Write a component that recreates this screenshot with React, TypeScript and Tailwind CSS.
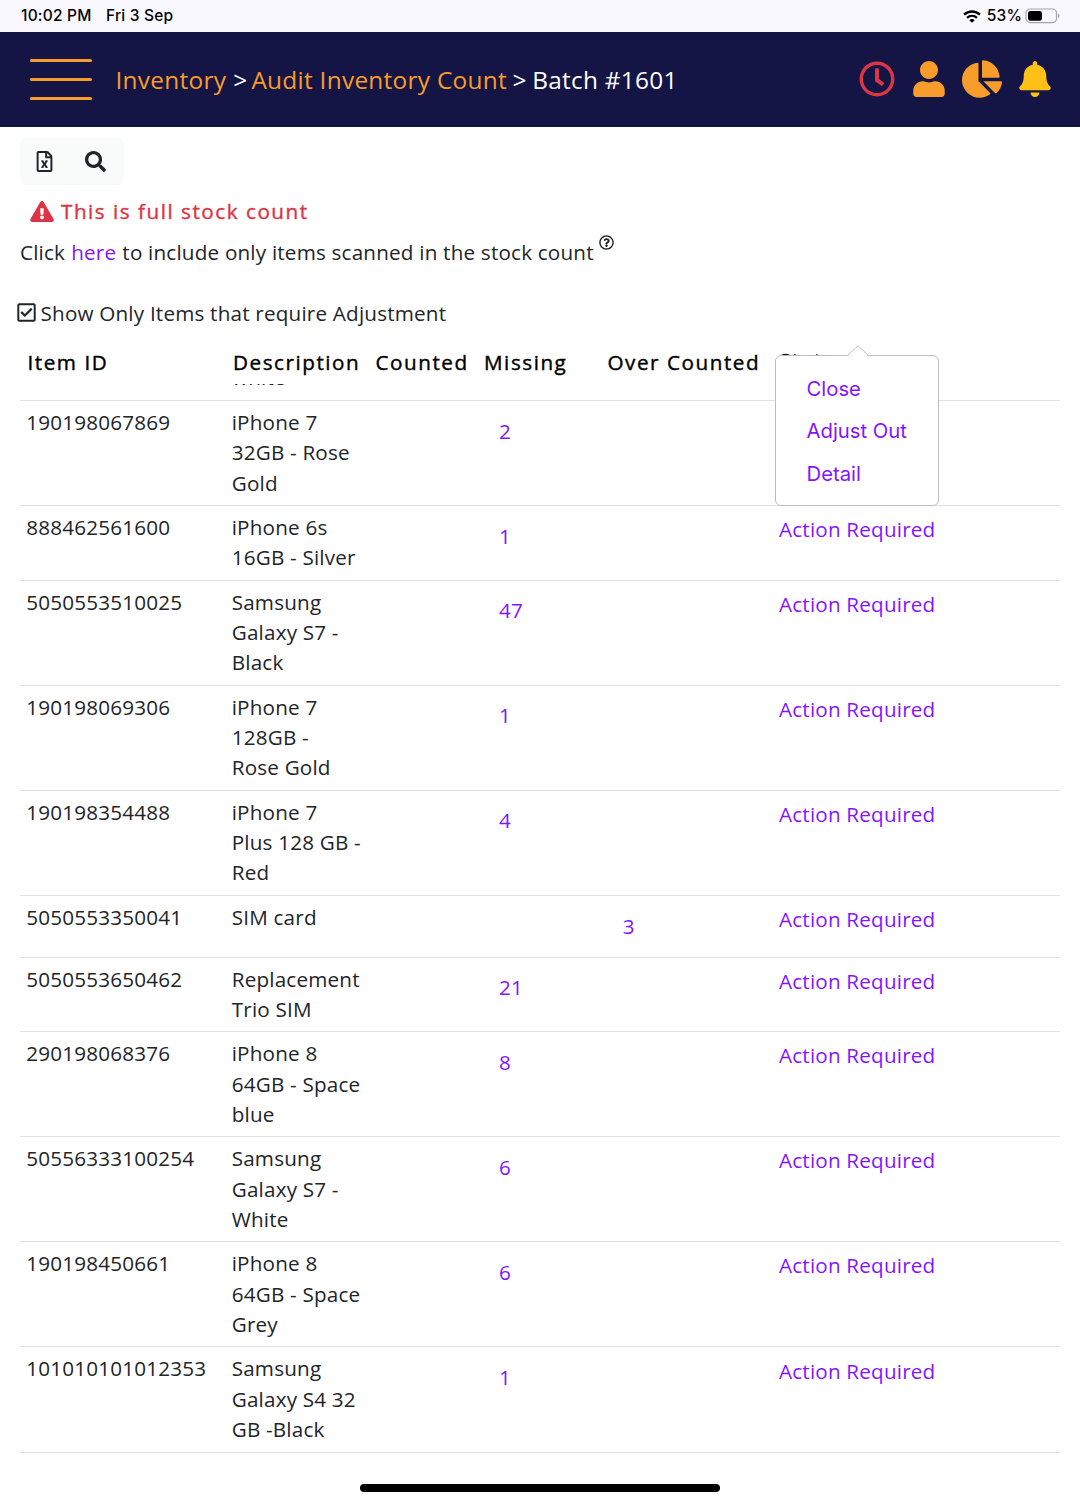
import { FaBell, FaChartPie, FaExclamationTriangle, FaRegCheckSquare, FaRegClock, FaRegFileExcel, FaRegQuestionCircle, FaSearch, FaUser } from 'react-icons/fa'

type Row = {
  id: string
  description: string[]
  missing?: number
  over?: number
  height: string
}

const rows: Row[] = [
  { id: '190198067869', description: ['iPhone 7', '32GB - Rose', 'Gold'], missing: 2, height: 'h-[105px]' },
  { id: '888462561600', description: ['iPhone 6s', '16GB - Silver'], missing: 1, height: 'h-[74.5px]' },
  { id: '5050553510025', description: ['Samsung', 'Galaxy S7 -', 'Black'], missing: 47, height: 'h-[105px]' },
  { id: '190198069306', description: ['iPhone 7', '128GB -', 'Rose Gold'], missing: 1, height: 'h-[105px]' },
  { id: '190198354488', description: ['iPhone 7', 'Plus 128 GB -', 'Red'], missing: 4, height: 'h-[105.3px]' },
  { id: '5050553350041', description: ['SIM card'], over: 3, height: 'h-[61.9px]' },
  { id: '5050553650462', description: ['Replacement', 'Trio SIM'], missing: 21, height: 'h-[74.5px]' },
  { id: '290198068376', description: ['iPhone 8', '64GB - Space', 'blue'], missing: 8, height: 'h-[105px]' },
  { id: '50556333100254', description: ['Samsung', 'Galaxy S7 -', 'White'], missing: 6, height: 'h-[105px]' },
  { id: '190198450661', description: ['iPhone 8', '64GB - Space', 'Grey'], missing: 6, height: 'h-[105.3px]' },
  { id: '101010101012353', description: ['Samsung', 'Galaxy S4 32', 'GB -Black'], missing: 1, height: 'h-[105.3px]' },
]

const columns = 'grid grid-cols-[205.5px_143.5px_108.5px_123.5px_171.5px_1fr]'

function StatusBar() {
  return (
    <div className="flex h-8 items-center bg-[#f9f8ff] pl-[21px] pr-[20px] font-[Inter,sans-serif] text-[15.5px] font-medium tracking-[0.2px] text-black">
      <span>10:02 PM</span>
      <span className="ml-[14.5px]">Fri 3 Sep</span>
      <svg className="ml-auto h-[13px] w-[18px]" viewBox="0 0 18 13" fill="none" stroke="currentColor">
        <path d="M1 4.7C5.6.4 12.4.4 17 4.7" strokeWidth="2.4" />
        <path d="M4 7.8c2.9-2.6 7.1-2.6 10 0" strokeWidth="2.3" />
        <path d="M9 12.8 6.3 10.2a4 4 0 0 1 5.4 0z" fill="currentColor" stroke="none" />
      </svg>
      <span className="ml-[6px]">53%</span>
      <svg className="ml-[3px] h-[16px] w-[35px]" viewBox="0 0 35 16">
        <rect x="1" y="1" width="30.5" height="13.6" rx="4" fill="none" stroke="#a4a3a9" strokeWidth="1.2" />
        <rect x="3" y="3" width="14" height="9.8" rx="2.3" fill="#000" />
        <path d="M33 5.5c2 .8 2 3.8 0 4.6z" fill="#a4a3a9" />
      </svg>
    </div>
  )
}

function Header() {
  return (
    <header className="flex h-[95px] items-center bg-[#141445] pl-[29.5px] pr-[27.5px] text-[#f89c2c]">
      <button className="flex w-[62px] flex-col gap-[16.3px]" aria-label="Menu">
        <span className="h-[2.7px] rounded-full bg-[#f89c2c]" />
        <span className="h-[2.7px] rounded-full bg-[#f89c2c]" />
        <span className="h-[2.7px] rounded-full bg-[#f89c2c]" />
      </button>
      <nav className="ml-[24px] mt-px flex text-[24.4px] tracking-[0.28px]">
        <a>Inventory</a>
        <span className="ml-[7px] text-white">&gt;</span>
        <a className="ml-[4px]">Audit Inventory Count</a>
        <span className="ml-[5.5px] text-white">&gt;</span>
        <span className="ml-[5.5px] text-white">Batch #1601</span>
      </nav>
      <div className="-mt-[2px] ml-auto flex items-center">
        <FaRegClock className="size-9 text-[#dc3545]" />
        <FaUser className="ml-[16px] h-9 w-[36px]" />
        <FaChartPie className="ml-[15px] h-[38px] w-10" />
        <FaBell className="ml-[15px] size-9 text-[#ffc117]" />
      </div>
    </header>
  )
}

function ActionMenu() {
  return (
    <div className="absolute left-[775px] top-[355px] h-[151px] w-[164px] rounded-[6px] border border-[#bdbdbd] bg-white pl-[30.5px] pt-[11.6px] font-[Inter,sans-serif] text-[20.3px] tracking-normal text-[#8414ff]">
      <svg className="absolute -top-[11px] left-[70.5px] h-[12px] w-[22px]" viewBox="0 0 22 12">
        <path d="M0 12 11 1l11 11z" fill="#fff" />
        <path d="M0 10.5h.6L11 .7l10.4 9.8h.6" fill="none" stroke="#bdbdbd" />
      </svg>
      <div className="h-[42.6px] leading-[42.6px]">Close</div>
      <div className="h-[42.6px] leading-[42.6px]">Adjust Out</div>
      <div className="h-[42.6px] leading-[42.6px]">Detail</div>
    </div>
  )
}

export default function App() {
  return (
    <div className="relative flex h-[1501px] w-[1080px] flex-col overflow-hidden bg-white font-['Open_Sans',sans-serif] text-[20.65px] leading-[30.45px] tracking-[0.2px] text-[#212529]">
      <StatusBar />
      <Header />

      <div className="ml-5 mt-[11px] flex h-[47px] w-[104px] items-center rounded-[6px] bg-[#f9fafa] pl-[14.4px]">
        <FaRegFileExcel className="size-[21px]" />
        <FaSearch className="ml-[30px] size-[21px]" />
      </div>

      <div className="ml-[30px] mt-[11px] flex h-[31px] items-center text-[#dc3545]">
        <FaExclamationTriangle className="h-[21px] w-6" />
        <span className="ml-[7px] tracking-[1.53px] [-webkit-text-stroke:0.4px]">This is full stock count</span>
      </div>

      <p className="ml-5 mt-[9px] flex h-[31px] items-center">
        <span className="mt-px">
          Click <a className="mx-[0.5px] text-[#8414ff]">here</a> to include only items scanned in the stock count
        </span>
        <FaRegQuestionCircle className="-mt-[18px] ml-[5.5px] size-[15px]" />
      </p>

      <label className="ml-[17px] mt-[30px] flex h-[31px] items-center">
        <FaRegCheckSquare className="h-[21px] w-[19px]" />
        <span className="ml-[4.5px] mt-px">Show Only Items that require Adjustment</span>
      </label>

      <main className="mx-5 mt-[15px]">
        <div className={`${columns} h-[41px] pt-[3.7px] tracking-[1.55px] text-black [-webkit-text-stroke:0.4px]`}>
          <span className="pl-[7.5px]">Item ID</span>
          <span className="pl-[7.5px]">Description</span>
          <span className="pl-[6.5px]">Counted</span>
          <span className="pl-[6.5px]">Missing</span>
          <span className="pl-[6.5px]">Over Counted</span>
          <span className="-mt-[1.7px] pl-[6.5px]">Status</span>
        </div>

        {/* tail of the row scrolled under the header */}
        <div className={`${columns} h-[17px] overflow-hidden border-b border-[#dee2e6]`}>
          <span className="col-start-2 -mt-[22px] pl-[6.5px]">white</span>
        </div>

        {rows.map((row) => (
          <div key={row.id} className={`${columns} ${row.height} border-b border-[#dee2e6] pt-[6px]`}>
            <span className="pl-[6.3px]">{row.id}</span>
            <div className="pl-[6.2px]">
              {row.description.map((line) => (
                <div key={line}>{line}</div>
              ))}
            </div>
            <span />
            <a className="pl-[21.5px] pt-[8.8px] text-[#8414ff]">{row.missing}</a>
            <a className="pl-[21.8px] pt-[8.8px] text-[#8414ff]">{row.over}</a>
            <a className="pl-[6.5px] pt-[2.3px] text-[#8414ff]">Action Required</a>
          </div>
        ))}
      </main>

      <ActionMenu />

      <div className="mx-auto mb-[9.5px] mt-auto h-[7.5px] w-[360px] rounded-full bg-black" />
    </div>
  )
}
